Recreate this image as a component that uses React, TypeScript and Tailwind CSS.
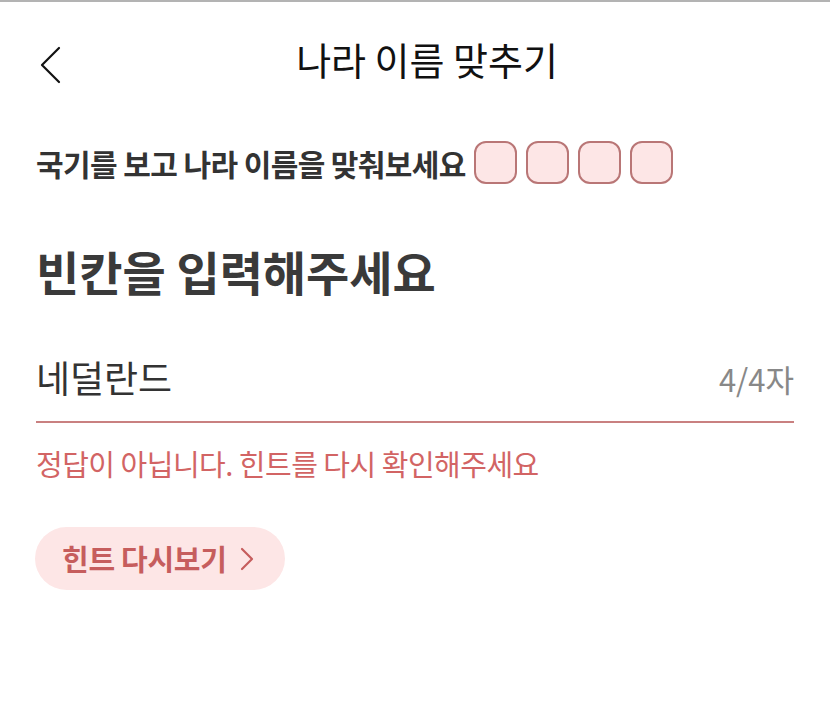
import React from 'react';

// Quiz screen: guess the country name from its flag
const FONT = { fontFamily: '"Noto Sans CJK KR", "Noto Sans", sans-serif' };

const BackIcon = () => (
  <svg width="24" height="40" viewBox="0 0 24 40" fill="none">
    <path d="M21 4 L4 21 L21 38" stroke="#111" strokeWidth="2.2" strokeLinecap="round" strokeLinejoin="round" />
  </svg>
);

const ChevronRight = () => (
  <svg width="14" height="24" viewBox="0 0 14 24" fill="none">
    <path d="M2 2 L12 12 L2 22" stroke="#c65d5d" strokeWidth="2.2" strokeLinecap="round" strokeLinejoin="round" />
  </svg>
);

export default function App() {
  const answer = '네덜란드';
  const maxLen = 4;

  return (
    <div className="w-[830px] h-[721px] bg-white border-t-2 border-[#b3b3b3] text-[#333]" style={FONT}>
      {/* header */}
      <div className="relative flex items-center justify-center h-[120px] pb-[6px] pl-[24px]">
        <button className="absolute left-[38px] top-[42px]">
          <BackIcon />
        </button>
        <h1 className="text-[38px] text-[#111] leading-none">나라 이름 맞추기</h1>
      </div>

      <div className="px-[36px]">
        <div className="mt-[19px] flex items-center h-[43px]">
          <p className="text-[30px] font-bold tracking-[-0.6px] text-[#333] leading-none mr-[8px]">국기를 보고 나라 이름을 맞춰보세요</p>
          <div className="flex gap-[9px]">
            {Array.from({ length: maxLen }).map((_, i) => (
              <div key={i} className="w-[43px] h-[43px] rounded-[12px] border-2 border-[#b97676] bg-[#fde6e6]" />
            ))}
          </div>
        </div>

        <h2 className="mt-[63px] text-[47px] font-bold text-[#3a3a3a] leading-none">빈칸을 입력해주세요</h2>

        <div className="mt-[65px] flex items-end justify-between border-b-2 border-[#c98080] pb-[25px]">
          <span className="text-[37px] text-[#333] leading-none">{answer}</span>
          <span className="text-[31px] text-[#888] leading-none mb-[2px]">{answer.length}/{maxLen}자</span>
        </div>

        <p className="mt-[26px] text-[29px] text-[#d26464] leading-none tracking-[-0.5px]">정답이 아닙니다. 힌트를 다시 확인해주세요</p>

        <button className="mt-[49px] -ml-[1px] flex items-center gap-[13px] h-[63px] pl-[27px] pr-[31px] rounded-full bg-[#fde6e6]">
          <span className="text-[29px] font-bold text-[#c65d5d] leading-none tracking-[-0.3px]">힌트 다시보기</span>
          <ChevronRight />
        </button>
      </div>
    </div>
  );
}
